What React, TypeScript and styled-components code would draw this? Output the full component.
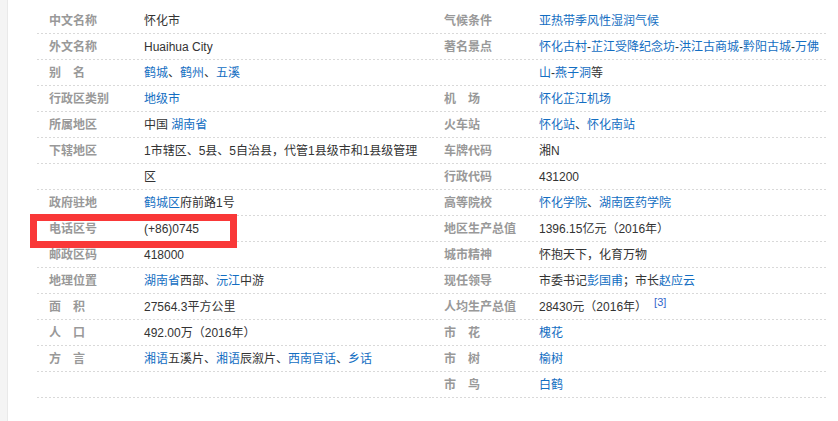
import React from "react";
import styled, { createGlobalStyle } from "styled-components";

const GlobalStyle = createGlobalStyle`
  html, body {
    margin: 0;
    padding: 0;
    background: #fff;
  }
  body {
    font-family: "Liberation Sans", Arial, "Noto Sans CJK SC", sans-serif;
    font-size: 12px;
    color: #333;
  }
`;

const Page = styled.div`
  width: 838px;
  height: 421px;
  box-sizing: border-box;
  border-left: 7px solid #f4f4f4;
  box-shadow: inset 1px 0 #e9e9e9;
  padding: 8px 0 0 30px;
  display: flex;
  overflow: hidden;
`;

const Column = styled.dl`
  margin: 0;
  width: 395px;
  display: flex;
  flex-direction: column;
`;

const Row = styled.div`
  position: relative;
  display: flex;
  height: 26px;
  line-height: 26px;
  background: linear-gradient(to right, #d9d9d9 50%, transparent 50%) left bottom / 4px 1px repeat-x;
`;

const Label = styled.dt`
  width: 95px;
  padding-left: 12px;
  font-weight: bold;
  color: #999;
  white-space: nowrap;
`;

const Value = styled.dd`
  margin: 0;
  flex: 1;
  color: #333;
  white-space: nowrap;
`;

const Link = styled.a`
  color: #136ec2;
  text-decoration: none;
`;

const Sup = styled.sup`
  display: inline-block;
  position: relative;
  top: 2px;
  margin-left: 7px;
  font-size: 11px;
  line-height: 12px;
  vertical-align: top;
  color: #3366cc;
`;

const Highlight = styled.div`
  position: absolute;
  top: -2px;
  left: -7px;
  width: 207px;
  height: 34px;
  box-sizing: border-box;
  border: 7px solid #f93838;
  pointer-events: none;
`;

type Part = string | { link: string } | { sup: string };

interface Item {
  label: string;
  value: Part[];
  marked?: boolean;
}

const L = (link: string): Part => ({ link });

const left: Item[] = [
  { label: "中文名称", value: ["怀化市"] },
  { label: "外文名称", value: ["Huaihua City"] },
  { label: "别　名", value: [L("鹤城"), "、", L("鹤州"), "、", L("五溪")] },
  { label: "行政区类别", value: [L("地级市")] },
  { label: "所属地区", value: ["中国 ", L("湖南省")] },
  { label: "下辖地区", value: ["1市辖区、5县、5自治县，代管1县级市和1县级管理"] },
  { label: "", value: ["区"] },
  { label: "政府驻地", value: [L("鹤城区"), "府前路1号"] },
  { label: "电话区号", value: ["(+86)0745"], marked: true },
  { label: "邮政区码", value: ["418000"] },
  { label: "地理位置", value: [L("湖南省"), "西部、", L("沅江"), "中游"] },
  { label: "面　积", value: ["27564.3平方公里"] },
  { label: "人　口", value: ["492.00万（2016年）"] },
  {
    label: "方　言",
    value: [L("湘语"), "五溪片、", L("湘语"), "辰溆片、", L("西南官话"), "、", L("乡话")],
  },
  { label: "", value: [] },
];

const right: Item[] = [
  { label: "气候条件", value: [L("亚热带季风性湿润气候")] },
  {
    label: "著名景点",
    value: [L("怀化古村"), "-", L("芷江受降纪念坊"), "-", L("洪江古商城"), "-", L("黔阳古城"), "-", L("万佛")],
  },
  { label: "", value: [L("山"), "-", L("燕子洞"), "等"] },
  { label: "机　场", value: [L("怀化芷江机场")] },
  { label: "火车站", value: [L("怀化站"), "、", L("怀化南站")] },
  { label: "车牌代码", value: ["湘N"] },
  { label: "行政代码", value: ["431200"] },
  { label: "高等院校", value: [L("怀化学院"), "、", L("湖南医药学院")] },
  { label: "地区生产总值", value: ["1396.15亿元（2016年）"] },
  { label: "城市精神", value: ["怀抱天下，化育万物"] },
  { label: "现任领导", value: ["市委书记", L("彭国甫"), "；市长", L("赵应云")] },
  { label: "人均生产总值", value: ["28430元（2016年）", { sup: "[3]" }] },
  { label: "市　花", value: [L("槐花")] },
  { label: "市　树", value: [L("榆树")] },
  { label: "市　鸟", value: [L("白鹤")] },
];

function renderPart(part: Part, i: number) {
  if (typeof part === "string") return <React.Fragment key={i}>{part}</React.Fragment>;
  if ("link" in part) return <Link key={i}>{part.link}</Link>;
  return <Sup key={i}>{part.sup}</Sup>;
}

function InfoColumn({ items }: { items: Item[] }) {
  return (
    <Column>
      {items.map((item, idx) => (
        <Row key={idx}>
          <Label>{item.label}</Label>
          <Value>{item.value.map(renderPart)}</Value>
          {item.marked && <Highlight />}
        </Row>
      ))}
    </Column>
  );
}

function App() {
  return (
    <>
      <GlobalStyle />
      <Page>
        <InfoColumn items={left} />
        <InfoColumn items={right} />
      </Page>
    </>
  );
}

export default App;
